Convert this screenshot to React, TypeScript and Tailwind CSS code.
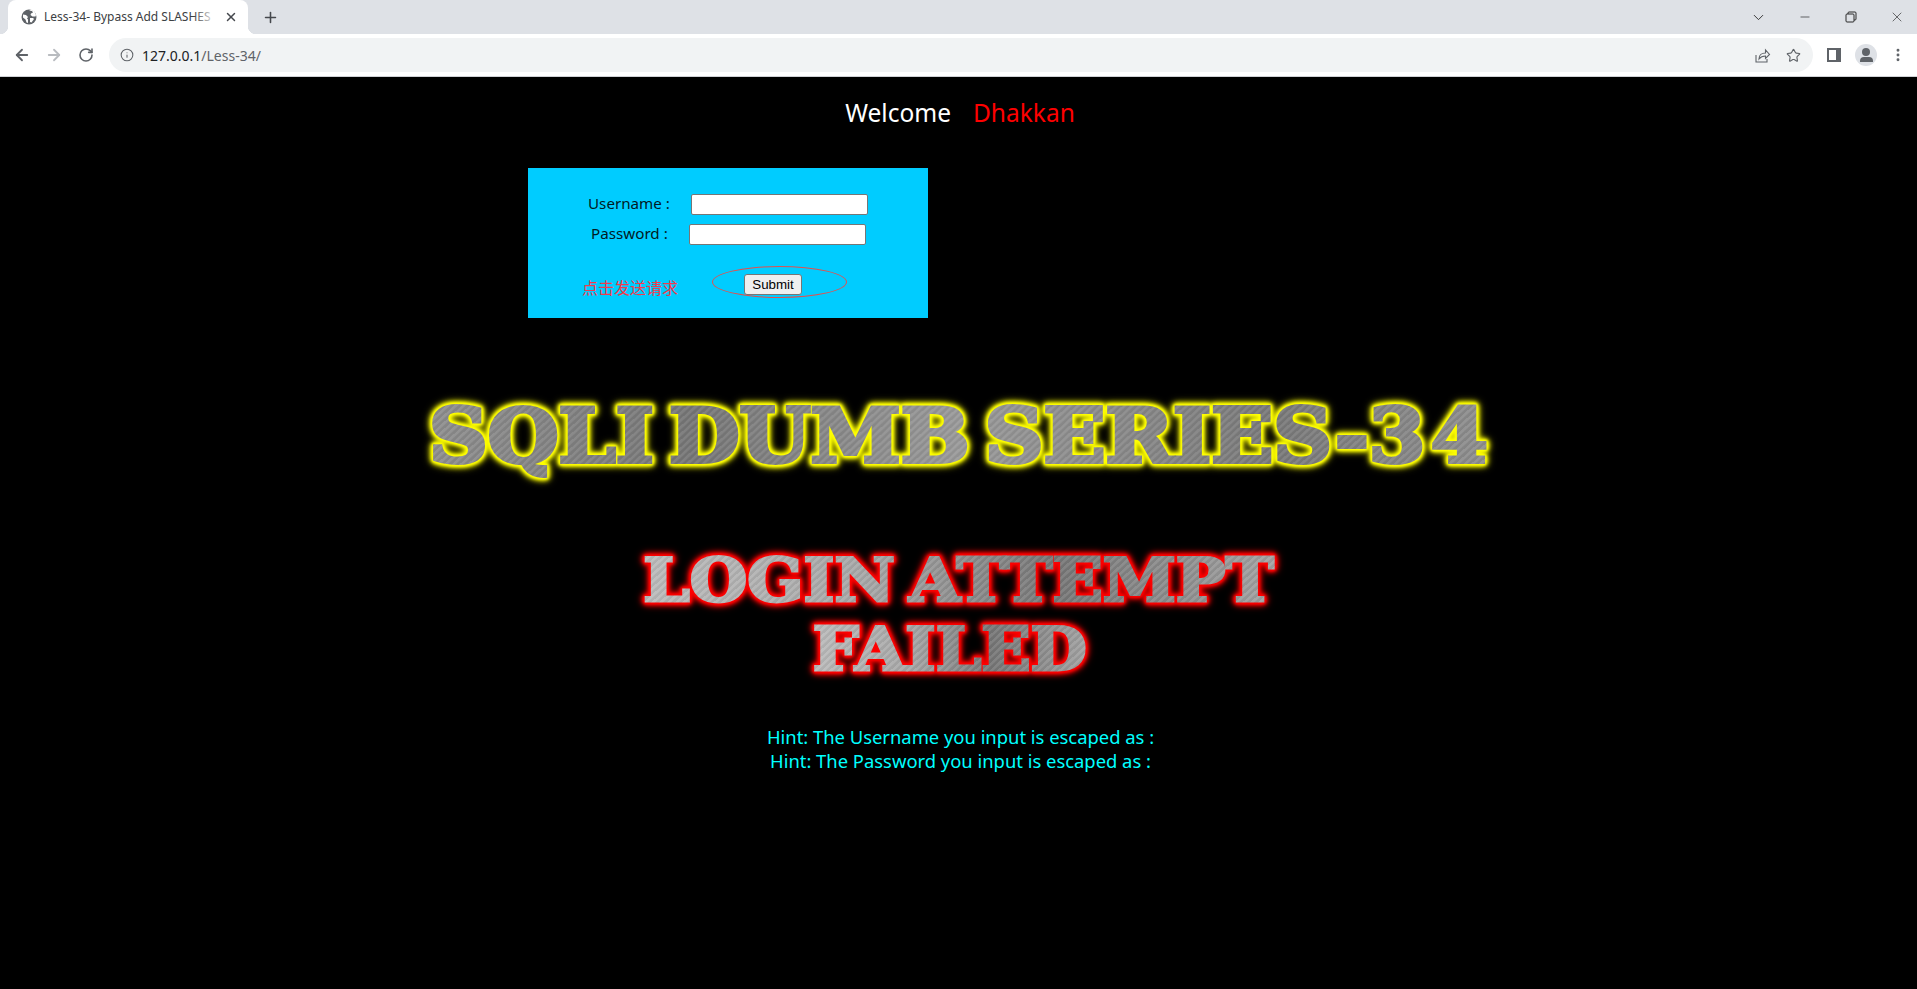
import { ArrowLeft, ArrowRight, RotateCw, Info, Star, X, Plus, ChevronDown, Minus, MoreVertical } from "lucide-react";

const BRUSHED_DARK =
  "bg-[repeating-linear-gradient(135deg,rgba(255,255,255,0.07)_0px,rgba(255,255,255,0.07)_2px,rgba(0,0,0,0.05)_3px,rgba(0,0,0,0.05)_5px),linear-gradient(90deg,#8f8f8f,#777_25%,#9a9a9a_50%,#7a7a7a_80%,#8f8f8f)]";
const BRUSHED_LIGHT =
  "bg-[repeating-linear-gradient(135deg,rgba(255,255,255,0.08)_0px,rgba(255,255,255,0.08)_2px,rgba(0,0,0,0.05)_3px,rgba(0,0,0,0.05)_5px),linear-gradient(90deg,#bcbcbc,#a8a8a8_35%,#777_65%,#8f8f8f_85%,#a4a4a4)]";

const YELLOW_GLOW =
  "[filter:drop-shadow(0_0_1px_#ffff00)_drop-shadow(0_0_1px_#ffff00)_drop-shadow(0_0_1.5px_#ffff00)_drop-shadow(0_0_2px_#ffff00)_drop-shadow(0_0_3px_#dddd00)]";
const RED_GLOW =
  "[filter:drop-shadow(0_0_1px_#ff0000)_drop-shadow(0_0_1px_#ff0000)_drop-shadow(0_0_1.5px_#ff0000)_drop-shadow(0_0_2px_#ff0000)_drop-shadow(0_0_3px_#dd0000)]";

function TabStrip() {
  return (
    <div className="h-[34px] bg-[#dee1e6] flex items-end pl-2 shrink-0">
      <div className="relative w-[240px] h-[34px] bg-white rounded-t-[8px] flex items-center pl-[13px] pr-[10px]">
        <div className="absolute left-[-8px] bottom-0 w-2 h-2 bg-[radial-gradient(circle_at_0_0,#dee1e6_8px,#ffffff_8.5px)]" />
        <div className="absolute right-[-8px] bottom-0 w-2 h-2 bg-[radial-gradient(circle_at_100%_0,#dee1e6_8px,#ffffff_8.5px)]" />
        <svg width="16" height="16" viewBox="0 0 16 16" className="shrink-0">
          <circle cx="8" cy="8" r="7.5" fill="#5f6368" />
          <path d="M2 5.500l3 .5 2 2-1 1.500 1 1v3.500l-1.500-.5-1-3L2 8.500z M8 1.500l3 .5 1 1.500-2 1-.5 1.500 2 1.500 3 0 .5-1.500-1.500-3.500-3-2z" fill="#fff" />
          <path d="M9 9h3l1 1-2.500 3.500-1.500-.5z" fill="#fff" />
        </svg>
        <div className="relative ml-[7px] w-[173px] overflow-hidden whitespace-nowrap text-[12px] text-[#3c4043] font-['Noto_Sans',sans-serif]">
          Less-34- Bypass Add SLASHES
          <div className="absolute right-0 top-0 bottom-0 w-6 bg-gradient-to-r from-transparent to-white" />
        </div>
        <X size={14} strokeWidth={2.5} className="ml-auto text-[#45484d]" />
      </div>
      <Plus size={17} strokeWidth={2.2} className="ml-[14px] mb-[8px] text-[#45484d]" />
      <div className="ml-auto h-[34px] flex items-center text-[#2b2b2b]">
        <ChevronDown size={17} strokeWidth={1.3} className="mr-[15px]" />
        <div className="w-[46px] flex justify-center">
          <Minus size={14} strokeWidth={1.2} />
        </div>
        <div className="w-[46px] flex justify-center">
          <svg width="12" height="12" viewBox="0 0 12 12" fill="none" stroke="#2b2b2b" strokeWidth="1">
            <rect x="1" y="3" width="8" height="8" rx="1" />
            <path d="M3 3V2a1 1 0 0 1 1-1h6a1 1 0 0 1 1 1v6a1 1 0 0 1-1 1H9" />
          </svg>
        </div>
        <div className="w-[40px] ml-[3px] flex justify-center">
          <X size={16} strokeWidth={1} />
        </div>
      </div>
    </div>
  );
}

function Toolbar() {
  return (
    <div className="h-[43px] bg-white flex items-center pl-[13px] border-b border-[#d0d2d6] shrink-0">
      <ArrowLeft size={18} strokeWidth={2.4} className="text-[#5f6368]" />
      <ArrowRight size={18} strokeWidth={2.4} className="ml-[14px] text-[#b9bcc0]" />
      <RotateCw size={16} strokeWidth={2.4} className="ml-[15px] text-[#5f6368]" />
      <div className="ml-[15px] h-[34px] w-[1704px] rounded-full bg-[#f1f3f4] flex items-center pl-[11px] pr-[12px]">
        <Info size={14} strokeWidth={1.8} className="text-[#5f6368]" />
        <span className="ml-[8px] text-[14px] font-['Noto_Sans',sans-serif] text-[#202124]">
          127.0.0.1<span className="text-[#5f6368]">/Less-34/</span>
        </span>
        <svg width="17" height="17" viewBox="0 0 17 17" fill="none" stroke="#5f6368" strokeWidth="1.1" className="ml-auto">
          <path d="M2 8v7h11v-3" />
          <path d="M5 12c0-4 3-6 6.500-6V3l4 4.500-4 4V9C9 9 6.500 10 5 12z" />
        </svg>
        <Star size={15} strokeWidth={1.8} className="ml-[15px] text-[#5f6368]" />
      </div>
      <svg width="14" height="14" viewBox="0 0 14 14" className="ml-[14px] shrink-0">
        <path fillRule="evenodd" d="M0 0h14v14H0z M2 2v10h7V2z" fill="#5f6368" />
      </svg>
      <div className="ml-[14px] w-[22px] h-[22px] rounded-full bg-[#dee1e6] flex flex-col items-center justify-center shrink-0">
        <div className="w-2 h-2 rounded-full bg-[#5f6368]" />
        <div className="w-[13px] h-[5px] mt-[1px] rounded-t-[4px] bg-[#5f6368]" />
      </div>
      <MoreVertical size={16} strokeWidth={2.4} className="ml-[13px] text-[#5f6368]" />
    </div>
  );
}

function LoginForm() {
  return (
    <div className="relative ml-[528px] mt-[38px] w-[400px] h-[150px] bg-[#00ccff] text-[15.2px] text-[#021a24] font-['Noto_Sans',sans-serif]">
      <div className="flex items-center pl-[60px] pt-[25px] h-[47px]">
        <span className="leading-[21px] mb-[2px]">Username :</span>
        <input className="ml-[21px] w-[177px] h-[21px] bg-white border border-[#767676] rounded-[2px]" />
      </div>
      <div className="flex items-center pl-[63px] pt-[9px] h-[30px]">
        <span className="leading-[21px] mb-[2px]">Password :</span>
        <input className="ml-[21px] w-[177px] h-[21px] bg-white border border-[#767676] rounded-[2px]" />
      </div>
      <div className="flex pl-[54px] pt-[29px]">
        <span className="mt-[3px] text-[16px] leading-[21px] text-[#f23a4c] font-['Noto_Sans_CJK_SC',sans-serif]">
          点击发送请求
        </span>
        <button className="ml-[66px] w-[58px] h-[21px] bg-[#efefef] border border-[#767676] rounded-[3px] text-[13.33px] leading-[17px] text-black font-['Liberation_Sans',sans-serif]">
          Submit
        </button>
      </div>
      {/* hand drawn circle around the button */}
      <div className="absolute left-[184px] top-[98px] w-[135px] h-[32px] rounded-[50%] border border-[#e2504f]" />
    </div>
  );
}

export default function App() {
  return (
    <div className="h-screen overflow-hidden flex flex-col bg-black">
      <TabStrip />
      <Toolbar />

      <div className="mt-[19px] pl-[3px] h-[34px] flex justify-center items-center text-[24.5px] font-['Noto_Sans',sans-serif]">
        <span className="text-white">Welcome</span>
        <span className="ml-[22px] text-[#ff0000]">Dhakkan</span>
      </div>

      <LoginForm />

      <div className="mt-[68px] flex justify-center">
        <div className={`scale-x-[1.1] ${YELLOW_GLOW}`}>
          <div className={`${BRUSHED_DARK} bg-clip-text text-transparent [-webkit-text-stroke:4px_transparent] [word-spacing:-12px] font-['DejaVu_Serif',serif] font-bold text-[74px] leading-[100px] whitespace-nowrap`}>
            SQLI DUMB SERIES-3<span className="ml-[5px]">4</span>
          </div>
        </div>
      </div>

      <div className="mt-[60px] flex flex-col items-center">
        <div className={`scale-x-[1.1] ${RED_GLOW}`}>
          <div className={`${BRUSHED_LIGHT} bg-clip-text text-transparent [-webkit-text-stroke:3px_transparent] [word-spacing:-8px] font-['DejaVu_Serif',serif] font-bold text-[60px] leading-[69px] whitespace-nowrap`}>
            LOGIN ATTEMPT
          </div>
        </div>
        <div className={`mr-[18px] scale-x-[1.08] ${RED_GLOW}`}>
          <div className={`${BRUSHED_LIGHT} bg-clip-text text-transparent [-webkit-text-stroke:3px_transparent] font-['DejaVu_Serif',serif] font-bold text-[60px] leading-[69px] whitespace-nowrap`}>
            FAILED
          </div>
        </div>
      </div>

      <div className="mt-[41px] pl-[4px] text-center text-[18.4px] leading-[24px] text-[#00ffff] font-['Noto_Sans',sans-serif]">
        <div>Hint: The Username you input is escaped as :</div>
        <div>Hint: The Password you input is escaped as :</div>
      </div>
    </div>
  );
}
